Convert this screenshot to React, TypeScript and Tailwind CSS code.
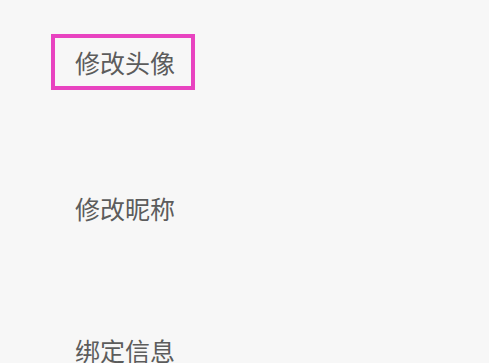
import React from 'react';

const items = ['修改头像', '修改昵称', '绑定信息'];

export default function App() {
  return (
    <div
      className="w-[489px] h-[363px] overflow-hidden bg-[#f7f7f7] text-[#5c5c5c]"
      style={{ fontFamily: '"Noto Sans CJK SC", "Noto Sans", sans-serif' }}
    >
      <div className="flex flex-col pl-[51px] pt-[34px]">
        <div className="h-[56px] w-[144px] flex items-center border-4 border-[#e843c0] pl-[20px]">
          <span className="text-[25px] leading-none">{items[0]}</span>
        </div>
        <div className="h-[90px]" />
        <div className="h-[56px] flex items-center pl-[24px]">
          <span className="text-[25px] leading-none">{items[1]}</span>
        </div>
        <div className="h-[86px]" />
        <div className="h-[56px] flex items-center pl-[24px]">
          <span className="text-[25px] leading-none">{items[2]}</span>
        </div>
      </div>
    </div>
  );
}
